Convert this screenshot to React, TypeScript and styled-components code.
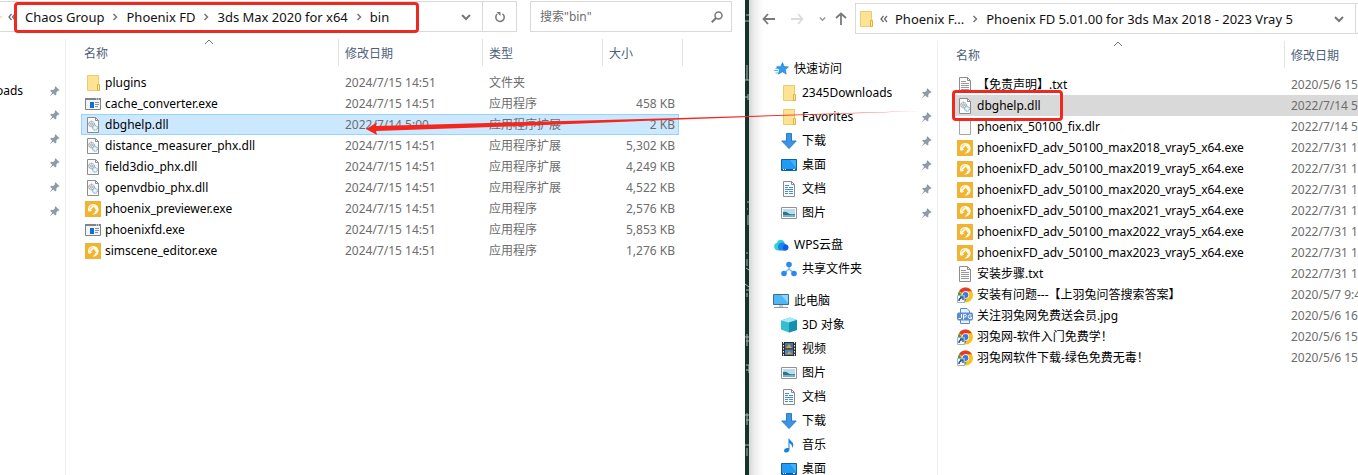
import React from "react";
import styled, { createGlobalStyle, css } from "styled-components";

const GlobalStyle = createGlobalStyle`
  *, *::before, *::after { box-sizing: border-box; }
  body {
    margin: 0;
    background: #fff;
    color: #000;
    font: 12px/20px "Noto Sans", "Noto Sans CJK SC", sans-serif;
  }
  button, input { font: inherit; color: inherit; }
`;

const Desktop = styled.main`
  position: relative;
  display: grid;
  grid-template-columns: minmax(0, 745fr) 4px minmax(0, 609fr);
  height: 100vh;
  overflow: hidden;
`;

const Window = styled.section<{ $raised?: boolean }>`
  display: flex;
  flex-direction: column;
  min-width: 0;
  overflow: hidden;
  background: ${(p) =>
    p.$raised ? "linear-gradient(90deg, #d6d6d6, #ececec 5px, #fbfbfb 12px, #fff 16px)" : "#fff"};
`;

const Gutter = styled.div`
  overflow: hidden;
  background: #14332b;
`;

const Toolbar = styled.header<{ $inset?: boolean }>`
  display: flex;
  flex: none;
  align-items: center;
  padding: ${(p) => (p.$inset ? "3px 0 0 12px" : "1px 13px 0 0")};
`;

const IconButton = styled.button<{ $w: number }>`
  display: flex;
  flex: none;
  align-items: center;
  justify-content: center;
  width: ${(p) => p.$w}px;
  height: 28px;
  padding: 0;
  border: 0;
  background: none;
`;

const OverflowButton = styled(IconButton)`
  justify-content: flex-start;
`;

const AddressBar = styled.div<{ $flush?: boolean }>`
  display: flex;
  flex: 1;
  align-items: center;
  min-width: 0;
  height: 31px;
  border: 1px solid #d9d9d9;
  ${(p) => p.$flush && css`border-left: 0;`}
`;

const Crumbs = styled.nav<{ $marked?: boolean }>`
  position: relative;
  display: flex;
  align-items: center;
  font-size: 13px;
  white-space: nowrap;
  ${(p) =>
    p.$marked &&
    css`
      &::after {
        content: "";
        position: absolute;
        inset: -5px -30px -6px -11px;
        border: 3px solid #ee2a20;
        border-radius: 4px;
        pointer-events: none;
      }
    `}
`;

const Crumb = styled.a`
  color: #111;
  text-decoration: none;
`;

const CrumbGap = styled.span`
  display: flex;
  justify-content: center;
  width: 22px;
`;

const Spacer = styled.span`
  flex: 1;
`;

const FolderSlot = styled.span<{ $w: number; $gap: number }>`
  display: flex;
  flex: none;
  justify-content: flex-end;
  width: ${(p) => p.$w}px;
  margin-right: ${(p) => p.$gap}px;
  overflow: hidden;
`;

const RefreshBox = styled.div`
  display: flex;
  flex: none;
  align-self: stretch;
  align-items: center;
  border-left: 1px solid #d9d9d9;
`;

const RefreshEdge = styled.div`
  flex: none;
  width: 2px;
  height: 31px;
  border: solid #d9d9d9;
  border-width: 1px 0;
`;

const SearchBox = styled.label`
  display: flex;
  flex: none;
  align-items: center;
  width: 202px;
  height: 31px;
  margin-left: 13px;
  padding: 0 8px 0 9px;
  border: 1px solid #d9d9d9;
`;

const SearchInput = styled.input`
  flex: 1;
  min-width: 0;
  padding: 0;
  border: 0;
  outline: 0;
  background: none;
  &::placeholder { color: #6d6d6d; opacity: 1; }
`;

const Body = styled.div`
  display: flex;
  flex: 1;
  min-height: 0;
  margin-top: 7px;
`;

const NavPane = styled.aside<{ $w: number }>`
  display: flex;
  flex: none;
  flex-direction: column;
  gap: 8px;
  width: ${(p) => p.$w}px;
  padding-top: 16px;
  overflow: hidden;
  border-right: 1px solid #f0f0f0;
`;

const NavGroup = styled.ul<{ $offset?: boolean }>`
  flex: none;
  margin: 0;
  padding: ${(p) => (p.$offset ? "24px 0 0" : "0")};
  list-style: none;
`;

const NavItem = styled.li<{ $level: number }>`
  display: flex;
  align-items: center;
  height: 24px;
  padding: 0 5px 0 ${(p) => [0, 24, 32][p.$level]}px;
`;

const NavLink = styled.a<{ $cut?: boolean }>`
  display: flex;
  flex: 1;
  gap: 5px;
  align-items: center;
  margin-left: ${(p) => (p.$cut ? "-4px" : "0")};
  color: #000;
  text-decoration: none;
  white-space: nowrap;
`;

const ListArea = styled.div`
  flex: 1;
  min-width: 0;
  padding-left: 15px;
  overflow: hidden;
`;

const FileTable = styled.table<{ $wide?: boolean }>`
  width: ${(p) => (p.$wide ? "100%" : "598px")};
  min-width: ${(p) => (p.$wide ? "405px" : "0")};
  table-layout: fixed;
  border-collapse: collapse;
  white-space: nowrap;
`;

const Col = styled.col<{ $w: number }>`
  width: ${(p) => p.$w}px;
`;

const HeadCell = styled.th<{ $pad: number; $edge?: number }>`
  position: relative;
  height: 33px;
  padding: 0 0 4px ${(p) => p.$pad}px;
  color: #4c607a;
  font-weight: 400;
  text-align: left;
  vertical-align: middle;
  &::after {
    content: "";
    position: absolute;
    top: 0;
    right: ${(p) => p.$edge ?? 0}px;
    height: 27px;
    border-right: 1px solid #e2e2e2;
  }
`;

const SortMark = styled.span`
  position: absolute;
  top: 0;
  left: 50%;
  display: flex;
  margin-left: -6px;
`;

const Row = styled.tr<{ $state?: "selected" | "inactive" }>`
  height: 21px;
  ${(p) =>
    p.$state === "selected" &&
    css`
      background: #cce8ff;
      outline: 1px solid #99d1ff;
      outline-offset: -1px;
    `}
  ${(p) => p.$state === "inactive" && css`background: #d9d9d9;`}
`;

const Cell = styled.td<{ $right?: boolean }>`
  height: 21px;
  padding: 0 4px 0 6px;
  overflow: hidden;
  color: #6d6d6d;
  text-align: ${(p) => (p.$right ? "right" : "left")};
`;

const NameCell = styled.td`
  height: 21px;
  padding: 0 0 0 4px;
`;

const FileName = styled.span<{ $marked?: boolean }>`
  position: relative;
  display: inline-flex;
  gap: 4px;
  align-items: center;
  height: 21px;
  vertical-align: top;
  ${(p) =>
    p.$marked &&
    css`
      &::after {
        content: "";
        position: absolute;
        inset: -5px -22px -5px -5px;
        border: 3px solid #ee2a20;
        border-radius: 4px;
        z-index: 1;
      }
    `}
`;

const Pointer = styled.svg`
  position: absolute;
  top: 108px;
  left: 26.95%;
  width: 40.8%;
  height: 28px;
  pointer-events: none;
`;

type IconName =
  | "folder" | "app" | "dll" | "phoenix" | "text" | "blank" | "chrome" | "jpg"
  | "star" | "download" | "desktop" | "doc" | "picture" | "cloud" | "share"
  | "pc" | "cube" | "film" | "music";

const sheet = (
  <>
    <path d="M2.5.5h8l3 3v12h-11z" fill="#fafafa" stroke="#8c8c8c" />
    <path d="M10.5.5v3h3" fill="none" stroke="#8c8c8c" />
  </>
);

const drawings: Record<IconName, React.ReactNode> = {
  folder: (
    <>
      <path d="M2.500.5h11v15h-11z" fill="#ffe394" stroke="#eccb6a" />
      <path d="M12.500 9.500h2v6h-2z" fill="#ffe9a8" stroke="#dfb23d" />
    </>
  ),
  app: (
    <>
      <path d="M.5 2.5h15v11H.5z" fill="#f4f4f4" stroke="#7d858c" />
      <path d="M0 2h16v2H0z" fill="#7d858c" />
      <path d="M11 3h1m1 0h1" stroke="#fff" />
      <path d="M5 6h4v6H5z" fill="#0a72d1" />
      <path d="M10 6.5h4m-4 2h4m-4 2h3" stroke="#8d969e" />
    </>
  ),
  dll: (
    <>
      {sheet}
      <circle cx="6.5" cy="7" r="2.8" fill="#e6e9eb" stroke="#7f8a91" strokeDasharray="1.4 .6" />
      <circle cx="6.5" cy="7" r="1" fill="#fff" stroke="#7f8a91" strokeWidth=".7" />
      <circle cx="10" cy="10.8" r="2.5" fill="#d9ecf5" stroke="#69a5c2" strokeDasharray="1.3 .6" />
      <circle cx="10" cy="10.8" r=".8" fill="#fff" />
    </>
  ),
  phoenix: (
    <>
      <path d="M0 0h16v16H0z" fill="#efb336" />
      <path d="M3.2 10.2C2.300 6 4.500 3 8.200 3c3.300 0 5.400 2.300 5.400 5.200 0 2.800-1.900 4.900-4.600 5.200H7.200c2-.8 2.900-1.900 2.800-3.600l1.500.3-2.700-4.300-2.900 3.200 1.300.1c-.6 1.400-2.500 2-4 1.100z" fill="#fff9dc" />
      <path d="M4.700 7.300C5 5.800 6 4.900 7.300 4.700" fill="none" stroke="#efb336" strokeWidth=".8" />
    </>
  ),
  text: (
    <>
      {sheet}
      <path d="M4 4.5h5m-5 2h8m-8 2h8m-8 2h8m-8 2h8" stroke="#9a9a9a" />
    </>
  ),
  blank: <path d="M2.5.5h11v15h-11z" fill="#fafafa" stroke="#a6a6a6" />,
  chrome: (
    <>
      <circle cx="8.5" cy="8" r="7.5" fill="#fbc116" />
      <path d="M8.5 8 2 4.2A7.5 7.5 0 0 1 15 4.3H8.5z" fill="#e33b2e" />
      <path d="M2 4.2a7.5 7.5 0 0 0 5.600 11.200L10 11 5.200 9.500z" fill="#2f9e4f" />
      <circle cx="8.5" cy="8" r="3.7" fill="#fff" />
      <circle cx="8.5" cy="8" r="2.9" fill="#3b78e7" />
      <path d="M.5 8.5h7v7h-7z" fill="#f5f8fb" stroke="#a5b3bf" />
      <path d="M2 14c0-2 .8-3 2.600-3M3 10h3v3" fill="none" stroke="#24568f" strokeWidth="1.4" />
    </>
  ),
  jpg: (
    <>
      <path d="M3.5 5V.5H10L12.500 3v2M3.500 12v3.500h9V12" fill="#e8f0fb" stroke="#5b8bd0" />
      <path d="M1 4.500h14l1 1.500v5l-1 1.500H1L0 11V6z" fill="#5b8bd0" />
      <path d="M4.500 6v3.500q0 1.500-3 1M6.500 11.500v-5h1.400q1.500 0 1.500 1.200T7.900 9H6.500M14.500 7q-3-1.200-3.300 1.600 0 2.700 3.300 1.900V9H13" fill="none" stroke="#fff" />
    </>
  ),
  star: (
    <>
      <path d="m9.500 1.500 1.700 4 4.300.4-3.200 2.900 1 4.300-3.800-2.300-4.200 2.400 1.200-4.400-3-2.800 4.200-.5z" fill="#2f9bea" stroke="#1d78c6" strokeWidth=".6" />
      <path d="M4 5.500h3M2.500 7.500H5M1 9.500h4M2.500 12h3" stroke="#56b1f0" />
    </>
  ),
  download: <path d="M5.500.5h5V8h4.700L8 15.500.8 8h4.700z" fill="#3c94e4" stroke="#2b7bcb" />,
  desktop: (
    <>
      <path d="M.5 2.5h15v11H.5z" fill="#1e9bf5" stroke="#145f9c" />
      <path d="M9 3h6v8z" fill="#3fb2ff" />
      <path d="M1 12.5h14" stroke="#0e5c9c" />
      <path d="M2 12.5h1m1 0h1m7 0h2" stroke="#fff" />
    </>
  ),
  doc: (
    <>
      {sheet}
      <path d="M4 4.5h4m-4 2h3m1 0h4m-8 2h8m-8 2h3m1 0h4m-8 2h3m1 0h4" stroke="#3f8fd2" />
    </>
  ),
  picture: (
    <>
      <path d="M.5 2.5h15v11H.5z" fill="#fff" stroke="#919191" />
      <path d="M2 4h12v8H2z" fill="#b9dcf2" />
      <path d="M2 7q3-1 5 1t7 1v3H2z" fill="#3f6f78" />
      <path d="M2 10h12v2H2z" fill="#6db1dd" />
    </>
  ),
  cloud: (
    <>
      <path d="M5.500 13.500H5a4 4 0 0 1-1-7.800C5 1.800 10.300 1.500 11.600 5.600z" fill="#2cd3d0" />
      <path d="M6 13.500C3.500 8.500 6 5.500 9.300 5.500c2 0 3 1.200 3.300 2 4 .3 3.600 6-.4 6z" fill="#1b83f2" />
      <path d="M10.500 13.500c-1.500-3.500 0-6 2.100-6 3.700.3 3.600 6-.4 6z" fill="#0d5de0" />
    </>
  ),
  share: (
    <>
      <path d="M8 4v4l-4.500 4M8 8l4.500 4" fill="none" stroke="#7fb8f8" strokeWidth="1.4" />
      <circle cx="8" cy="3.500" r="2.8" fill="#2f86f0" />
      <circle cx="3" cy="12.500" r="2.8" fill="#2f86f0" />
      <circle cx="13" cy="12.500" r="2.8" fill="#2f86f0" />
    </>
  ),
  pc: (
    <>
      <path d="M.5 1.5h15v10H.5z" fill="#4fb7f5" stroke="#3b6e92" />
      <path d="M8 2h7v8z" fill="#8bd4ff" />
      <path d="M6 13h4M1 14.5h14" stroke="#8a979f" />
    </>
  ),
  cube: (
    <>
      <path d="m0 3.500 9-3L16 3v10l-8 2.500-8-3z" fill="#35bdd2" />
      <path d="m0 3.500 9-3L16 3 8 5.500z" fill="#a5ebf3" />
      <path d="M8 5.500 16 3v10l-8 2.500z" fill="#178fae" />
    </>
  ),
  film: (
    <>
      <path d="M1 1h14v14H1z" fill="#2e2e2e" />
      <path d="M4 2h8v5.500H4z" fill="#4573ae" />
      <path d="M4 8.500h8V14H4z" fill="#5a7fb5" />
      <path d="m5 7 3-4 3 4zm1 6 2-3 3 3z" fill="#d7a437" />
      <path d="M2.500 1v14m11-14v14" stroke="#f2f2f2" strokeDasharray="1.5 1.5" />
    </>
  ),
  music: (
    <path d="M7.500.5c.5 3 5.500 4 4.700 8.200-.5 1.300-.9 1.900-1.300 2.300.5-3-.8-4.300-2.400-4.800v6.300c0 3.300-5.500 4-5.500 1.200 0-1.900 2-3.200 4.500-2.700z" fill="#1783e0" />
  ),
};

const Icon = ({ name }: { name: IconName }) => (
  <svg width="16" height="16" viewBox="0 0 16 16" aria-hidden="true">
    {drawings[name]}
  </svg>
);

const Pin = () => (
  <svg width="11" height="11" viewBox="0 0 11 11" aria-hidden="true">
    <path d="m6.500.3 4 4-1 .7-.7-.2-1.600 1.900.2 2-.9.900-2.200-2.200L.5 10.600 3.200 6.700 1.200 4.700l.9-.9 2.100.1L6 2.200 5.700 1z" fill="#8e9aa5" />
  </svg>
);

const Chevron = () => (
  <svg width="10" height="8" viewBox="0 0 10 8" aria-hidden="true">
    <path d="m1 2 4 4 4-4" fill="none" stroke="#777" strokeWidth="2" />
  </svg>
);

const Separator = () => (
  <CrumbGap aria-hidden="true">
    <svg width="6" height="8" viewBox="0 0 6 8">
      <path d="m1.500 1 3 3-3 3" fill="none" stroke="#777" strokeWidth="1.5" />
    </svg>
  </CrumbGap>
);

const Overflow = () => (
  <svg width="8" height="8" viewBox="0 0 8 8" aria-hidden="true">
    <path d="M3.500 1 1 4l2.500 3M7 1 4.500 4 7 7" fill="none" stroke="#666" strokeWidth="1.2" />
  </svg>
);

const Trail = ({ parts, marked }: { parts: string[]; marked?: boolean }) => (
  <Crumbs $marked={marked} aria-label="地址">
    {parts.map((part, i) => (
      <React.Fragment key={part}>
        {i > 0 && <Separator />}
        <Crumb href="#">{part}</Crumb>
      </React.Fragment>
    ))}
  </Crumbs>
);

const Sorted = () => (
  <SortMark>
    <svg width="10" height="6" viewBox="0 0 10 6" aria-hidden="true">
      <path d="m1 5 4-4 4 4" fill="none" stroke="#777" />
    </svg>
  </SortMark>
);

type NavEntry = { icon: IconName; label: string; level: number; pinned?: boolean };

const navGroups: NavEntry[][] = [
  [
    { icon: "star", label: "快速访问", level: 1 },
    { icon: "folder", label: "2345Downloads", level: 2, pinned: true },
    { icon: "folder", label: "Favorites", level: 2, pinned: true },
    { icon: "download", label: "下载", level: 2, pinned: true },
    { icon: "desktop", label: "桌面", level: 2, pinned: true },
    { icon: "doc", label: "文档", level: 2, pinned: true },
    { icon: "picture", label: "图片", level: 2, pinned: true },
  ],
  [
    { icon: "cloud", label: "WPS云盘", level: 1 },
    { icon: "share", label: "共享文件夹", level: 2 },
  ],
  [
    { icon: "pc", label: "此电脑", level: 1 },
    { icon: "cube", label: "3D 对象", level: 2 },
    { icon: "film", label: "视频", level: 2 },
    { icon: "picture", label: "图片", level: 2 },
    { icon: "doc", label: "文档", level: 2 },
    { icon: "download", label: "下载", level: 2 },
    { icon: "music", label: "音乐", level: 2 },
    { icon: "desktop", label: "桌面", level: 2 },
  ],
];

const binFiles: [IconName, string, string, string, string][] = [
  ["folder", "plugins", "2024/7/15 14:51", "文件夹", ""],
  ["app", "cache_converter.exe", "2024/7/15 14:51", "应用程序", "458 KB"],
  ["dll", "dbghelp.dll", "2022/7/14 5:00", "应用程序扩展", "2 KB"],
  ["dll", "distance_measurer_phx.dll", "2024/7/15 14:51", "应用程序扩展", "5,302 KB"],
  ["dll", "field3dio_phx.dll", "2024/7/15 14:51", "应用程序扩展", "4,249 KB"],
  ["dll", "openvdbio_phx.dll", "2024/7/15 14:51", "应用程序扩展", "4,522 KB"],
  ["phoenix", "phoenix_previewer.exe", "2024/7/15 14:51", "应用程序", "2,576 KB"],
  ["app", "phoenixfd.exe", "2024/7/15 14:51", "应用程序", "5,853 KB"],
  ["phoenix", "simscene_editor.exe", "2024/7/15 14:51", "应用程序", "1,276 KB"],
];

const setupFiles: [IconName, string, string][] = [
  ["text", "【免责声明】.txt", "2020/5/6 15"],
  ["dll", "dbghelp.dll", "2022/7/14 5"],
  ["blank", "phoenix_50100_fix.dlr", "2022/7/14 5"],
  ...["2018", "2019", "2020", "2021", "2022", "2023"].map(
    (year): [IconName, string, string] => [
      "phoenix",
      `phoenixFD_adv_50100_max${year}_vray5_x64.exe`,
      "2022/7/31 1",
    ],
  ),
  ["text", "安装步骤.txt", "2022/7/31 1"],
  ["chrome", "安装有问题---【上羽兔问答搜索答案】", "2020/5/7 9:4"],
  ["jpg", "关注羽兔网免费送会员.jpg", "2020/5/6 16"],
  ["chrome", "羽兔网-软件入门免费学！", "2020/5/6 15"],
  ["chrome", "羽兔网软件下载-绿色免费无毒！", "2020/5/6 15"],
];

const BinWindow = () => (
  <Window>
    <Toolbar>
      <AddressBar $flush>
        <FolderSlot $w={2} $gap={6}><Icon name="folder" /></FolderSlot>
        <OverflowButton $w={17} aria-label="上级文件夹"><Overflow /></OverflowButton>
        <Trail marked parts={["Chaos Group", "Phoenix FD", "3ds Max 2020 for x64", "bin"]} />
        <Spacer />
        <IconButton $w={33} aria-label="历史记录"><Chevron /></IconButton>
        <RefreshBox>
          <IconButton $w={33} aria-label="刷新">
            <svg width="12" height="12" viewBox="0 0 12 12">
              <path d="M8.500 2.800A4.200 4.200 0 1 1 3.300 3" fill="none" stroke="#777" strokeWidth="1.5" />
              <path d="M2.500 1h4v4z" fill="#777" />
            </svg>
          </IconButton>
        </RefreshBox>
      </AddressBar>
      <SearchBox>
        <SearchInput type="search" placeholder={'搜索"bin"'} aria-label="搜索" />
        <svg width="12" height="12" viewBox="0 0 12 12" aria-hidden="true">
          <circle cx="7.500" cy="4.500" r="3.5" fill="none" stroke="#777" strokeWidth="1.5" />
          <path d="M5 7 .8 11.200" stroke="#777" strokeWidth="2" />
        </svg>
      </SearchBox>
    </Toolbar>
    <Body>
      <NavPane $w={66}>
        <NavGroup $offset>
          {["oads", "", "", "", "", ""].map((label, i) => (
            <NavItem key={i} $level={0}>
              <NavLink href="#" $cut>{label}</NavLink>
              <Pin />
            </NavItem>
          ))}
        </NavGroup>
      </NavPane>
      <ListArea>
        <FileTable>
          <colgroup>
            <Col $w={258} /><Col $w={144} /><Col $w={120} /><Col $w={76} />
          </colgroup>
          <thead>
            <tr>
              <HeadCell $pad={3}>名称<Sorted /></HeadCell>
              <HeadCell $pad={6}>修改日期</HeadCell>
              <HeadCell $pad={6}>类型</HeadCell>
              <HeadCell $pad={6} $edge={-4}>大小</HeadCell>
            </tr>
          </thead>
          <tbody>
            {binFiles.map(([icon, name, date, kind, size]) => (
              <Row key={name} $state={name === "dbghelp.dll" ? "selected" : undefined}>
                <NameCell><FileName><Icon name={icon} />{name}</FileName></NameCell>
                <Cell>{date}</Cell>
                <Cell>{kind}</Cell>
                <Cell $right>{size}</Cell>
              </Row>
            ))}
          </tbody>
        </FileTable>
      </ListArea>
    </Body>
  </Window>
);

const SetupWindow = () => (
  <Window $raised>
    <Toolbar $inset>
      <IconButton $w={15} aria-label="后退">
        <svg width="13" height="12" viewBox="0 0 13 12">
          <path d="M6 1 1.500 6 6 11M1.500 6H13" fill="none" stroke="#7a7a7a" strokeWidth="1.8" />
        </svg>
      </IconButton>
      <IconButton $w={43} aria-label="前进">
        <svg width="13" height="12" viewBox="0 0 13 12">
          <path d="m7 1 4.500 5L7 11M11.500 6H0" fill="none" stroke="#dcdcdc" strokeWidth="1.8" />
        </svg>
      </IconButton>
      <IconButton $w={7} aria-label="最近位置">
        <svg width="7" height="6" viewBox="0 0 7 6">
          <path d="m.8 1.500 2.700 2.700 2.700-2.700" fill="none" stroke="#999" strokeWidth="1.5" />
        </svg>
      </IconButton>
      <IconButton $w={29} aria-label="上移">
        <svg width="12" height="13" viewBox="0 0 12 13">
          <path d="m1 6 5-4.500L11 6M6 1.500V13" fill="none" stroke="#7a7a7a" strokeWidth="1.8" />
        </svg>
      </IconButton>
      <AddressBar>
        <FolderSlot $w={18} $gap={6}><Icon name="folder" /></FolderSlot>
        <OverflowButton $w={15} aria-label="上级文件夹"><Overflow /></OverflowButton>
        <Trail parts={["Phoenix F...", "Phoenix FD 5.01.00 for 3ds Max 2018 - 2023 Vray 5"]} />
        <Spacer />
        <IconButton $w={32} aria-label="历史记录"><Chevron /></IconButton>
      </AddressBar>
      <RefreshEdge />
    </Toolbar>
    <Body>
      <NavPane $w={189}>
        {navGroups.map((group) => (
          <NavGroup key={group[0].label}>
            {group.map(({ icon, label, level, pinned }) => (
              <NavItem key={label} $level={level}>
                <NavLink href="#"><Icon name={icon} />{label}</NavLink>
                {pinned && <Pin />}
              </NavItem>
            ))}
          </NavGroup>
        ))}
      </NavPane>
      <ListArea>
        <FileTable $wide>
          <colgroup>
            <Col $w={332} /><col />
          </colgroup>
          <thead>
            <tr>
              <HeadCell $pad={3}>名称<Sorted /></HeadCell>
              <HeadCell $pad={6} $edge={-4}>修改日期</HeadCell>
            </tr>
          </thead>
          <tbody>
            {setupFiles.map(([icon, name, date]) => (
              <Row key={name} $state={name === "dbghelp.dll" ? "inactive" : undefined}>
                <NameCell>
                  <FileName $marked={name === "dbghelp.dll"}><Icon name={icon} />{name}</FileName>
                </NameCell>
                <Cell>{date}</Cell>
              </Row>
            ))}
          </tbody>
        </FileTable>
      </ListArea>
    </Body>
  </Window>
);

export default function App() {
  return (
    <>
      <GlobalStyle />
      <Desktop>
        <BinWindow />
        <Gutter>
          <svg width="4" height="475" viewBox="0 0 4 475" aria-hidden="true">
            <path d="M1 15h3M0 21h4M0 80h4M2 65v15M0 97h3M3 94v6M2 202h2M2 209h1M3 215v10M1 253h2M2 259v7M1 268l3 2M0 284l4 3M1 290h3M2 293v4M0 337h4M1 341h3M2 334v12M1 365h3v8M1 370h3M0 415h4M1 420h3M2 413v12M0 445h4M2 448v8" fill="none" stroke="#a9b8b3" />
          </svg>
        </Gutter>
        <SetupWindow />
        <Pointer viewBox="0 0 554 28" preserveAspectRatio="none" aria-hidden="true">
          <path d="m0 21 11-6.500-1 3.500 131-3.500L314 10l240-7-240 8.500L141 18.500 10 23l1 4z" fill="#f5261b" />
        </Pointer>
      </Desktop>
    </>
  );
}
